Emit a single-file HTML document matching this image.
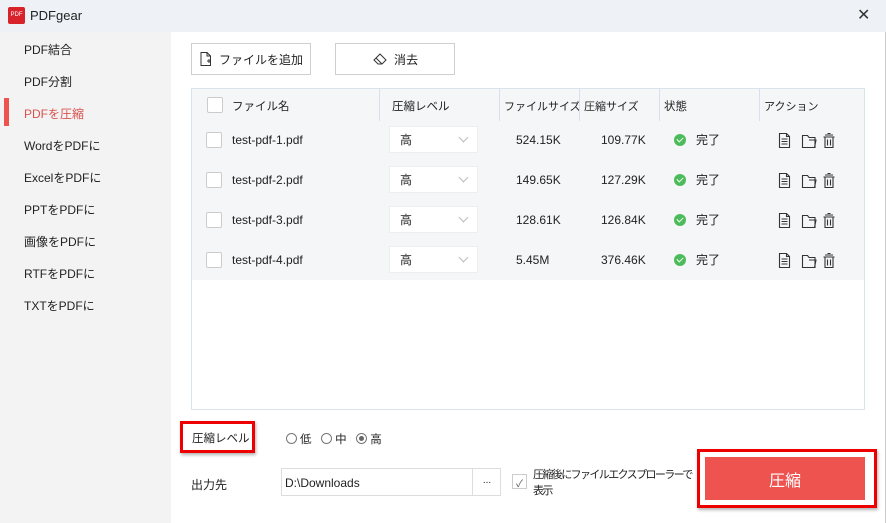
<!DOCTYPE html>
<html><head><meta charset="utf-8"><style>
*{margin:0;padding:0;box-sizing:border-box}
body{width:886px;height:523px;overflow:hidden;background:#eef2f6;font-family:"Liberation Sans","Noto Sans CJK JP",sans-serif;font-size:12px;color:#222;position:relative}
.a{position:absolute}
.side{left:0;top:32px;width:171px;height:491px;background:#f3f3f3}
.side div{position:absolute;left:24px;font-size:12px;color:#222}
.main{left:171px;top:32px;width:715px;height:491px;background:#fff;border-right:1px solid #ccc}
.btn{background:#fff;border:1px solid #cfcfcf;height:32px;display:flex;align-items:center;justify-content:center;gap:6px}
.tbl{left:191px;top:88px;width:674px;height:322px;background:#f5f6f8;border:1px solid #d8e3ea}
.cb{position:absolute;width:16px;height:16px;border:1px solid #ccc;background:#fff;border-radius:2px}
.sel{position:absolute;left:197px;width:89px;height:27px;background:#fff;border:1px solid #eee;padding:5px 10px;line-height:16px}
.sel:after{content:"";position:absolute;right:10px;top:7px;width:6px;height:6px;border-right:1px solid #bbb;border-bottom:1px solid #bbb;transform:rotate(45deg)}
.ok{position:absolute;width:12px;height:12px;border-radius:50%;background:#4cbb5a}
.ok:after{content:"";position:absolute;left:4px;top:2px;width:3px;height:5px;border-right:1.5px solid #fff;border-bottom:1.5px solid #fff;transform:rotate(45deg)}
.rb{display:inline-block;width:11px;height:11px;border:1px solid #777;border-radius:50%;vertical-align:-1px;margin-right:3px;position:relative}
.h{position:absolute;top:9px;font-size:11.5px}
.t{position:absolute;line-height:14px}
</style></head><body>
<svg width="0" height="0" style="position:absolute"><defs>
<g id="ic" fill="none" stroke="#333" stroke-width="1.1">
<path d="M1.5 1.5h7l3 3v11h-10z M8.5 1.5v3h3 M3.5 7h6 M3.5 9.5h6 M3.5 12h6"/>
<path d="M24.5 3.5h5l1.5 2h6v10h-12.5z M31 8h7l-1.5 7.5"/>
<path d="M47 3h8 M49.5 1.5h3 M45.5 5h11 M47 5v10.5h8V5 M49.5 7.5v6 M52.5 7.5v6"/>
</g></defs></svg>
<div class="a" style="left:8px;top:7px;width:17px;height:17px;background:#d8232a;border-radius:2px;color:#fff;font-size:6px;line-height:17px;text-align:center">PDF</div>
<div class="a" style="left:30px;top:8px;font-size:13px">PDFgear</div>
<div class="a" style="left:857px;top:5px;font-size:16px;color:#333">✕</div>
<div class="a side">
<div style="top:9px">PDF結合</div><div style="top:41px">PDF分割</div>
<div style="top:73px;color:#d9534f">PDFを圧縮</div>
<div style="top:105px">WordをPDFに</div><div style="top:137px">ExcelをPDFに</div><div style="top:169px">PPTをPDFに</div><div style="top:201px">画像をPDFに</div><div style="top:233px">RTFをPDFに</div><div style="top:265px">TXTをPDFに</div>
<span style="position:absolute;left:4px;top:66px;width:5px;height:28px;background:#ef5350"></span>
</div>
<div class="a main"></div>
<div class="a btn" style="left:191px;top:43px;width:120px"><svg width="14" height="16"><path d="M2 1.5h6l3.5 3.5v9.5h-9.5z M8 1.5v3.5h3.5 M8 10h4 M10 8v4" fill="none" stroke="#333"/></svg>ファイルを追加</div>
<div class="a btn" style="left:335px;top:43px;width:120px"><svg width="16" height="14"><path d="M2 8l6-6 6 6-4 4H6z M4 6l6 6" fill="none" stroke="#333"/></svg>消去</div>
<div class="a tbl">
<div class="cb" style="left:15px;top:8px"></div>
<div class="h" style="left:40px">ファイル名</div>
<div class="a" style="left:187px;top:0;height:32px;border-left:1px solid #dde">&nbsp;</div>
<div class="h" style="left:200px">圧縮レベル</div>
<div class="a" style="left:307px;top:0;height:32px;border-left:1px solid #dde">&nbsp;</div>
<div class="h" style="left:312px;font-size:11px">ファイルサイズ</div>
<div class="a" style="left:387px;top:0;height:32px;border-left:1px solid #dde">&nbsp;</div>
<div class="h" style="left:392px;font-size:11px">圧縮サイズ</div>
<div class="a" style="left:467px;top:0;height:32px;border-left:1px solid #dde">&nbsp;</div>
<div class="h" style="left:472px">状態</div>
<div class="a" style="left:567px;top:0;height:32px;border-left:1px solid #dde">&nbsp;</div>
<div class="h" style="left:572px;font-size:11px">アクション</div>
</div>
<div class="a" style="left:192px;top:120px;width:672px;height:289px">
 <div class="cb" style="left:14px;top:12px"></div><div class="t" style="left:40px;top:13px">test-pdf-1.pdf</div><div class="sel" style="top:6px">高</div><div class="t" style="left:324px;top:13px">524.15K</div><div class="t" style="left:409px;top:13px">109.77K</div><div class="ok" style="left:482px;top:14px"></div><div class="t" style="left:504px;top:13px">完了</div><svg class="a" style="left:586px;top:12px" width="60" height="18"><use href="#ic"/></svg>
 <div class="cb" style="left:14px;top:52px"></div><div class="t" style="left:40px;top:53px">test-pdf-2.pdf</div><div class="sel" style="top:46px">高</div><div class="t" style="left:324px;top:53px">149.65K</div><div class="t" style="left:409px;top:53px">127.29K</div><div class="ok" style="left:482px;top:54px"></div><div class="t" style="left:504px;top:53px">完了</div><svg class="a" style="left:586px;top:52px" width="60" height="18"><use href="#ic"/></svg>
 <div class="cb" style="left:14px;top:92px"></div><div class="t" style="left:40px;top:93px">test-pdf-3.pdf</div><div class="sel" style="top:86px">高</div><div class="t" style="left:324px;top:93px">128.61K</div><div class="t" style="left:409px;top:93px">126.84K</div><div class="ok" style="left:482px;top:94px"></div><div class="t" style="left:504px;top:93px">完了</div><svg class="a" style="left:586px;top:92px" width="60" height="18"><use href="#ic"/></svg>
 <div class="cb" style="left:14px;top:132px"></div><div class="t" style="left:40px;top:133px">test-pdf-4.pdf</div><div class="sel" style="top:126px">高</div><div class="t" style="left:324px;top:133px">5.45M</div><div class="t" style="left:409px;top:133px">376.46K</div><div class="ok" style="left:482px;top:134px"></div><div class="t" style="left:504px;top:133px">完了</div><svg class="a" style="left:586px;top:132px" width="60" height="18"><use href="#ic"/></svg>
 <div class="a" style="top:160px;width:672px;height:129px;background:#fff"></div>
</div>
<div class="a" style="left:180px;top:421px;width:75px;height:32px;border:3px solid #e00;box-shadow:1px 2px 3px rgba(0,0,0,.3);padding:6px 0 0 9px;font-size:11.5px">圧縮レベル</div>
<div class="a" style="left:286px;top:431px;font-size:11.5px"><span class="rb"></span>低 &nbsp;&nbsp;<span class="rb"></span>中 &nbsp;&nbsp;<span class="rb"><span style="position:absolute;left:2px;top:2px;width:5px;height:5px;border-radius:50%;background:#666"></span></span>高</div>
<div class="a" style="left:191px;top:476px">出力先</div>
<div class="a" style="left:281px;top:468px;width:220px;height:28px;border:1px solid #ddd;background:#fff;padding:7px 3px">D:\Downloads</div>
<div class="a" style="left:472px;top:468px;width:29px;height:28px;border-left:1px solid #ddd;text-align:center;padding-top:7px;font-size:10px">...</div>
<div class="a" style="left:512px;top:474px;width:15px;height:15px;border:1px solid #ccc;background:#fff;font-size:10px;text-align:center;color:#555">✓</div>
<div class="a" style="left:533px;top:467px;width:165px;line-height:16px;font-size:11px;letter-spacing:-1.6px;white-space:nowrap">圧縮後にファイルエクスプローラーで<br>表示</div>
<div class="a" style="left:697px;top:449px;width:180px;height:59px;border:3px solid #e00;box-shadow:1px 2px 3px rgba(0,0,0,.3)"></div>
<div class="a" style="left:705px;top:457px;width:160px;height:43px;background:#ef5350;color:#fff;font-size:16px;display:flex;align-items:center;justify-content:center">圧縮</div>
</body></html>
